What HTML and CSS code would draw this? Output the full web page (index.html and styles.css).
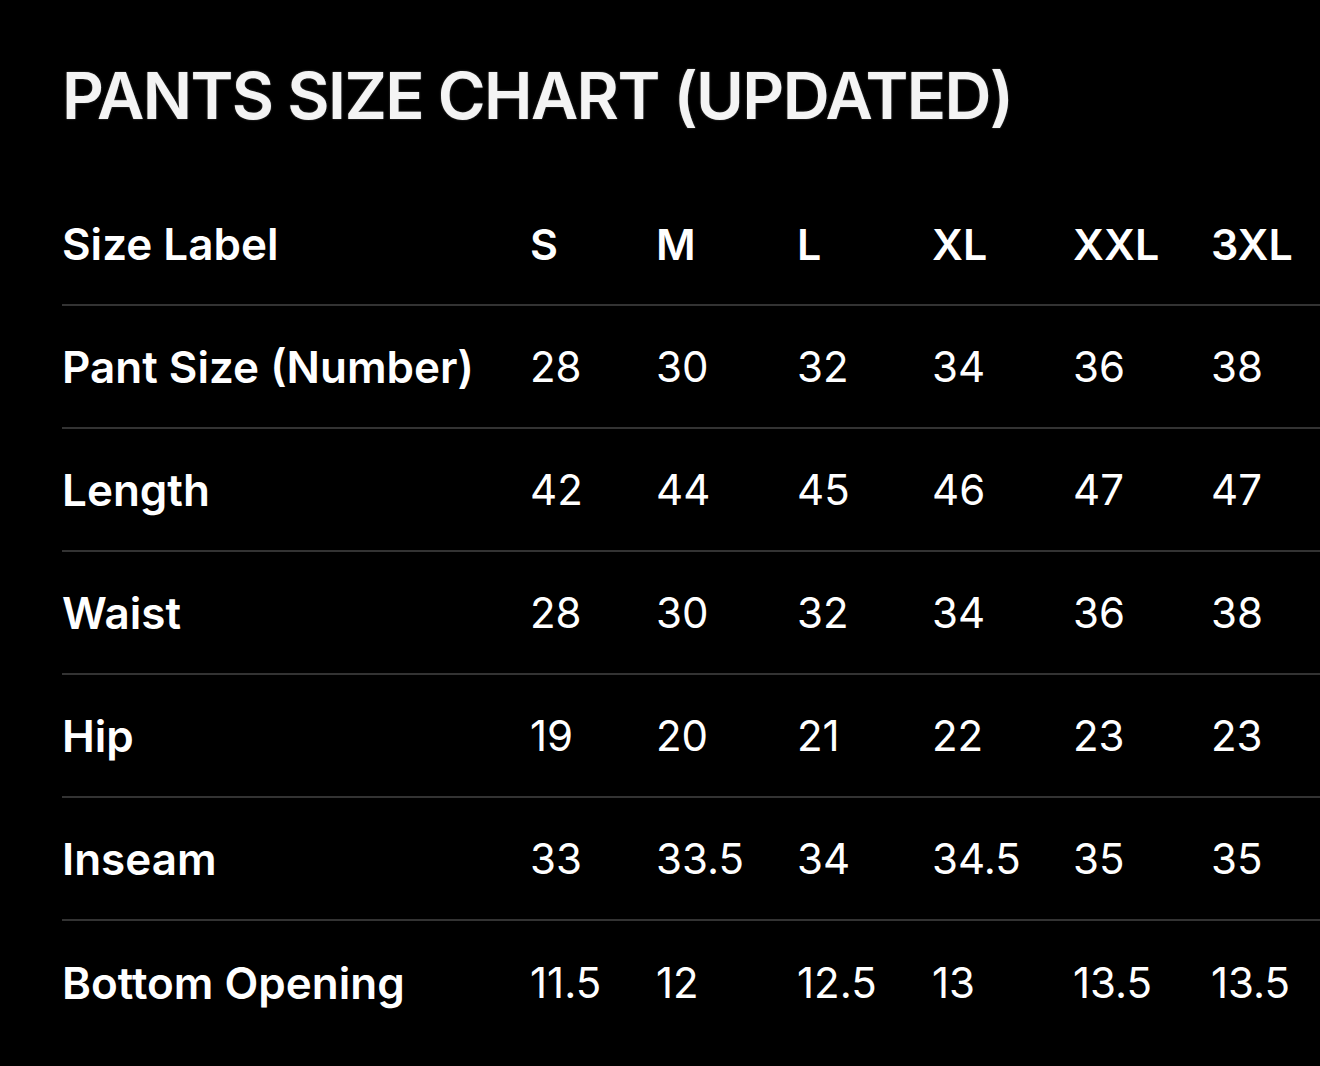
FILE: index.html
```html
<!DOCTYPE html>
<html lang="en">
<head>
<meta charset="utf-8">
<title>Pants Size Chart</title>
<link rel="stylesheet" href="styles.css">
</head>
<body>
<main class="chart">
  <h1 class="title">PANTS SIZE CHART (UPDATED)</h1>
  <div class="table">
    <div class="row">
      <div class="label">Size Label</div>
      <div class="cell head">S</div><div class="cell head">M</div><div class="cell head">L</div><div class="cell head">XL</div><div class="cell head">XXL</div><div class="cell head">3XL</div>
    </div>
    <div class="row">
      <div class="label">Pant Size (Number)</div>
      <div class="cell">28</div><div class="cell">30</div><div class="cell">32</div><div class="cell">34</div><div class="cell">36</div><div class="cell">38</div>
    </div>
    <div class="row">
      <div class="label">Length</div>
      <div class="cell">42</div><div class="cell">44</div><div class="cell">45</div><div class="cell">46</div><div class="cell">47</div><div class="cell">47</div>
    </div>
    <div class="row">
      <div class="label">Waist</div>
      <div class="cell">28</div><div class="cell">30</div><div class="cell">32</div><div class="cell">34</div><div class="cell">36</div><div class="cell">38</div>
    </div>
    <div class="row">
      <div class="label">Hip</div>
      <div class="cell">19</div><div class="cell">20</div><div class="cell">21</div><div class="cell">22</div><div class="cell">23</div><div class="cell">23</div>
    </div>
    <div class="row">
      <div class="label">Inseam</div>
      <div class="cell">33</div><div class="cell">33.5</div><div class="cell">34</div><div class="cell">34.5</div><div class="cell">35</div><div class="cell">35</div>
    </div>
    <div class="row last">
      <div class="label">Bottom Opening</div>
      <div class="cell">11.5</div><div class="cell">12</div><div class="cell">12.5</div><div class="cell">13</div><div class="cell">13.5</div><div class="cell">13.5</div>
    </div>
  </div>
</main>
</body>
</html>
```
FILE: styles.css
```css
html, body {
  margin: 0;
  padding: 0;
  background: #000;
}
body {
  width: 1320px;
  height: 1066px;
  overflow: hidden;
  color: #fff;
  font-family: Inter, "Noto Sans", sans-serif;
}
.chart {
  padding-left: 62px;
}
.title {
  margin: 0;
  height: 183px;
  box-sizing: border-box;
  padding-top: 58px;
  font-size: 65px;
  line-height: 76px;
  font-weight: 600;
  letter-spacing: -1.6px;
  white-space: nowrap;
  color: #f4f4f4;
  text-shadow: 0 0 2px rgba(255,255,255,0.35);
}
.table {
  display: flex;
  flex-direction: column;
}
.row {
  display: grid;
  grid-template-columns: 468px 126px 141px 135px 141px 138px 1fr;
  align-items: center;
  height: 123px;
  box-sizing: border-box;
  border-bottom: 2px solid #333;
}
.row.last {
  border-bottom: none;
}
.label {
  font-family: Inter, "Noto Sans", sans-serif;
  font-weight: 600;
  font-size: 44px;
  line-height: 50px;
  white-space: nowrap;
}
.cell {
  font-family: Inter, "Noto Sans", sans-serif;
  font-weight: 400;
  font-size: 42px;
  line-height: 50px;
  white-space: nowrap;
}
.cell.head {
  font-weight: 600;
  font-size: 43px;
}
```
